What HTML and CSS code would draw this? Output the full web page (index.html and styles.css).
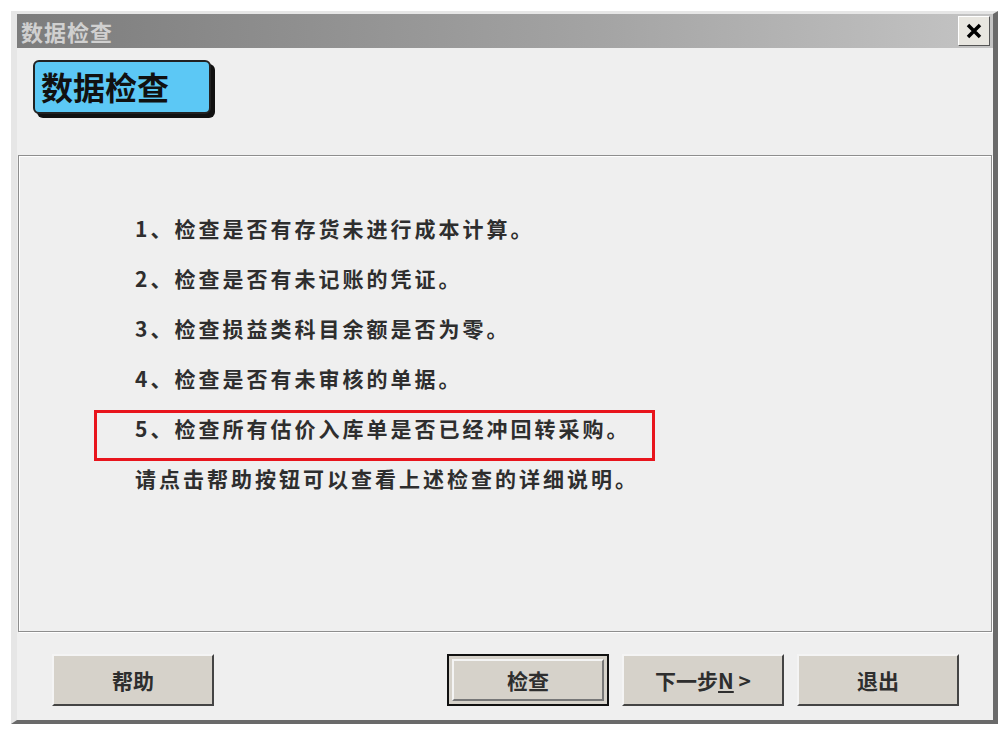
FILE: index.html
```html
<!DOCTYPE html>
<html lang="zh-CN">
<head>
    <meta charset="UTF-8">
    <title>数据检查</title>
    <link rel="stylesheet" href="styles.css">
</head>
<body>
    <div class="window">
        <div class="titlebar">
            <span class="title">数据检查</span>
            <div class="close-btn">
                <svg width="18" height="16" viewBox="0 0 18 16">
                    <path d="M3 2 L15 14 M15 2 L3 14" stroke="#000" stroke-width="3.5"/>
                </svg>
            </div>
        </div>

        <div class="header">
            <div class="badge">数据检查</div>
        </div>

        <div class="panel">
            <div class="line">1、检查是否有存货未进行成本计算。</div>
            <div class="line">2、检查是否有未记账的凭证。</div>
            <div class="line">3、检查损益类科目余额是否为零。</div>
            <div class="line">4、检查是否有未审核的单据。</div>
            <div class="line marked">5、检查所有估价入库单是否已经冲回转采购。</div>
            <div class="line">请点击帮助按钮可以查看上述检查的详细说明。</div>
        </div>

        <div class="buttons">
            <div class="btn">帮助</div>
            <div class="spacer"></div>
            <div class="btn default"><span>检查</span></div>
            <div class="btn"><span>下一步<u>N</u> &gt;</span></div>
            <div class="btn">退出</div>
        </div>
    </div>
</body>
</html>
```

FILE: styles.css
```css
body {
    margin: 0;
    background: #fff;
    font-family: "Noto Sans CJK SC", "Noto Sans", sans-serif;
    color: #222;
}
.window {
    margin: 11px 0 0 11px;
    width: 987px;
    height: 713px;
    box-sizing: border-box;
    background: #efefef;
    border-left: 6px solid #e6e6e6;
    border-top: 3px solid #e6e6e6;
    border-right: 5px solid #6a6a6a;
    border-bottom: 4px solid #6a6a6a;
    display: flex;
    flex-direction: column;
}
.titlebar {
    height: 34px;
    background: linear-gradient(90deg, #7c7c7c 0%, #a4a4a4 60%, #c4c4c4 100%);
    display: flex;
    align-items: center;
    justify-content: space-between;
    padding: 0 3px 0 4px;
}
.title {
    color: #d0d0d0;
    font-size: 22px;
    font-weight: bold;
    letter-spacing: 1px;
}
.close-btn {
    width: 30px;
    height: 28px;
    background: #e8e6e0;
    border: 1px solid #fff;
    border-right-color: #555;
    border-bottom-color: #555;
    display: flex;
    align-items: center;
    justify-content: center;
}
.header {
    height: 107px;
    padding: 12px 0 0 16px;
    box-sizing: border-box;
}
.badge {
    width: 178px;
    height: 54px;
    box-sizing: border-box;
    background: #5cc8f5;
    border: 2px solid #222;
    border-radius: 6px;
    box-shadow: 4px 4px 0 #111;
    font-size: 32px;
    font-weight: bold;
    line-height: 48px;
    padding-left: 6px;
    color: #111;
}
.panel {
    margin: 0 1px 0 1px;
    height: 477px;
    box-sizing: border-box;
    border: 1px solid #8e8e8e;
    box-shadow: inset 1px 1px 0 #fff, 1px 1px 0 #fff;
    padding: 47px 0 0 116px;
}
.line {
    height: 50px;
    line-height: 50px;
    font-size: 21px;
    font-weight: bold;
    letter-spacing: 3px;
    color: #2e2e2e;
}
.line.marked {
    width: 561px;
    height: 51px;
    margin: 7px 0 -8px -41px;
    padding-left: 38px;
    box-sizing: border-box;
    border: 3px solid #e8141c;
    line-height: 30px;
}
.buttons {
    display: flex;
    gap: 13px;
    padding: 22px 0 0 35px;
}
.spacer {
    width: 207px;
}
.btn {
    width: 162px;
    height: 52px;
    box-sizing: border-box;
    background: #d6d2ca;
    border: 2px solid #f4f4f4;
    border-right-color: #444;
    border-bottom-color: #444;
    font-size: 21px;
    font-weight: bold;
    display: flex;
    align-items: center;
    justify-content: center;
    color: #2e2e2e;
}
.btn u {
    text-decoration: underline;
}
.btn.default {
    border: 2px solid #111;
    padding: 3px;
}
.btn.default span {
    flex: 1;
    height: 100%;
    box-sizing: border-box;
    border: 2px solid #f4f4f4;
    border-right-color: #777;
    border-bottom-color: #777;
    display: flex;
    align-items: center;
    justify-content: center;
}
```
